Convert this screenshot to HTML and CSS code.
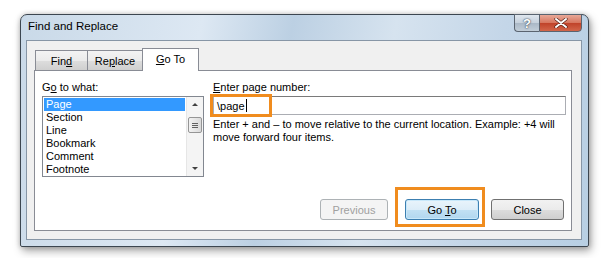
FILE: index.html
```html
<!DOCTYPE html>
<html>
    <head>
        <meta charset="utf-8">
        <title>Find and Replace</title>
        <link rel="stylesheet" href="styles.css">
    </head>
    <body>
        <div class="stage">
            <div class="window">
                <div class="titlebar">
                    <span class="title">Find and Replace</span>
                    <div class="caption-buttons">
                        <span class="cap-help">?</span>
                        <span class="cap-close">
                            <svg width="14" height="10" viewBox="0 0 14 10">
                                <path d="M2 1 L12 9 M12 1 L2 9" stroke="#4a1a10" stroke-width="3.2" stroke-linecap="round"/>
                                <path d="M2 1 L12 9 M12 1 L2 9" stroke="#ffffff" stroke-width="2" stroke-linecap="round"/>
                            </svg>
                        </span>
                    </div>
                </div>

                <div class="client">
                    <div class="tabs">
                        <div class="tab">Fin<u>d</u></div>
                        <div class="tab">Re<u>p</u>lace</div>
                        <div class="tab active"><u>G</u>o To</div>
                    </div>

                    <div class="panel">
                        <div class="fields">
                            <div class="col-left">
                                <label>G<u>o</u> to what:</label>
                                <div class="listbox">
                                    <ul class="items">
                                        <li class="selected">Page</li>
                                        <li>Section</li>
                                        <li>Line</li>
                                        <li>Bookmark</li>
                                        <li>Comment</li>
                                        <li>Footnote</li>
                                    </ul>
                                    <div class="scrollbar">
                                        <span class="arrow up"></span>
                                        <span class="thumb"><i></i><i></i><i></i></span>
                                        <span class="arrow down"></span>
                                    </div>
                                </div>
                            </div>
                            <div class="col-right">
                                <label><u>E</u>nter page number:</label>
                                <div class="textbox">
                                    <span class="value">\page</span><span class="caret"></span>
                                    <span class="highlight hl-input"></span>
                                </div>
                                <p class="hint">Enter + and &ndash; to move relative to the current location. Example: +4 will move forward four items.</p>
                            </div>
                        </div>

                        <div class="button-row">
                            <button class="btn" disabled>Previous</button>
                            <button class="btn default">Go <u>T</u>o<span class="highlight hl-button"></span></button>
                            <button class="btn">Close</button>
                        </div>
                    </div>
                </div>
            </div>
        </div>
    </body>
</html>
```

FILE: styles.css
```css
* {
    margin: 0;
    padding: 0;
    box-sizing: border-box;
}

body {
    width: 609px;
    height: 258px;
    background: #ffffff;
    font-family: 'Liberation Sans', Arial, sans-serif;
    font-size: 11px;
    color: #000000;
    overflow: hidden;
}

.stage {
    padding: 14px 20px 0 20px;
}

.window {
    width: 569px;
    height: 233px;
    border: 1px solid #3c4650;
    border-radius: 7px 7px 2px 2px;
    background: linear-gradient(100deg, #c9d9e8 0%, #dde8f3 30%, #bcd0e3 45%, #d6e3ef 62%, #c4d6e8 80%, #b8cfe3 100%);
    box-shadow: 2px 4px 8px rgba(0,0,0,0.35), 0 0 5px rgba(0,0,0,0.2);
    display: flex;
    flex-direction: column;
}

.titlebar {
    height: 25px;
    display: flex;
    align-items: flex-start;
    justify-content: space-between;
    padding-left: 7px;
}

.title {
    margin-top: 5px;
    font-size: 11.5px;
    color: #000000;
}

.caption-buttons {
    display: flex;
    margin-right: 6px;
    margin-top: -1px;
}

.cap-help,
.cap-close {
    height: 18px;
    display: flex;
    align-items: center;
    justify-content: center;
    border: 1px solid #5a6470;
}

.cap-help {
    width: 25px;
    border-radius: 0 0 0 4px;
    border-right: none;
    background: linear-gradient(#dfe6ee 0%, #c6d1dc 50%, #aab8c6 51%, #c2ced9 100%);
    color: #ffffff;
    font-weight: bold;
    font-size: 13px;
    text-shadow: 0 0 2px #3a4a5a, 0 0 1px #3a4a5a;
}

.cap-close {
    width: 43px;
    border-radius: 0 0 4px 0;
    background: linear-gradient(#e8a898 0%, #d7775f 48%, #c0432a 52%, #d2664a 100%);
}

.client {
    flex: 1;
    margin: 0 6px 6px 5px;
    background: #f0f0f0;
    border: 1px solid #8796a6;
    padding: 7px 9px 8px 7px;
    display: flex;
    flex-direction: column;
}

.tabs {
    display: flex;
    align-items: flex-end;
    padding-left: 1px;
    height: 22px;
    position: relative;
    z-index: 1;
}

.tab {
    height: 20px;
    padding: 2px 0 0 0;
    text-align: center;
    border: 1px solid #898c95;
    border-bottom: none;
    background: linear-gradient(#f3f3f3 0%, #ebebeb 50%, #dddddd 51%, #cfcfcf 100%);
    margin-right: -1px;
    line-height: 17px;
}

.tab:nth-child(1) {
    width: 53px;
}

.tab:nth-child(2) {
    width: 56px;
}

.tab.active {
    width: 57px;
    height: 23px;
    background: #ffffff;
    margin-bottom: -1px;
    padding-top: 2px;
}

.panel {
    flex: 1;
    background: #ffffff;
    border: 1px solid #898c95;
    padding: 9px 5px 10px 7px;
    display: flex;
    flex-direction: column;
}

.fields {
    display: flex;
    gap: 9px;
}

label {
    display: block;
    line-height: 15px;
    margin-bottom: 1px;
}

.col-left {
    width: 162px;
}

.listbox {
    height: 81px;
    border: 1px solid #828790;
    display: flex;
}

.items {
    flex: 1;
    list-style: none;
    padding: 1px 1px 0 1px;
}

.items li {
    height: 13px;
    line-height: 13px;
    padding-left: 2px;
}

.items li.selected {
    background: #3399ff;
    color: #ffffff;
}

.scrollbar {
    width: 17px;
    background: #f4f4f4;
    border-left: 1px solid #e6e6e6;
    display: flex;
    flex-direction: column;
    align-items: center;
}

.arrow {
    width: 0;
    height: 0;
    border-left: 3px solid transparent;
    border-right: 3px solid transparent;
}

.arrow.up {
    margin-top: 6px;
    border-bottom: 3px solid #404040;
}

.arrow.down {
    margin-top: auto;
    margin-bottom: 6px;
    border-top: 3px solid #404040;
}

.thumb {
    margin-top: 11px;
    width: 14px;
    height: 16px;
    border: 1px solid #959595;
    border-radius: 2px;
    background: linear-gradient(90deg, #f2f2f2, #dadada);
    display: flex;
    flex-direction: column;
    align-items: center;
    justify-content: center;
    gap: 1px;
}

.thumb i {
    display: block;
    width: 6px;
    height: 1px;
    background: #606060;
}

.col-right {
    flex: 1;
}

.textbox {
    position: relative;
    height: 19px;
    border: 1px solid #abadb3;
    border-top-color: #7a7a7a;
    display: flex;
    align-items: center;
    padding-left: 3px;
}

.caret {
    width: 1px;
    height: 13px;
    background: #000000;
    margin-left: 1px;
}

.highlight {
    position: absolute;
    border: 3px solid #f08c1e;
    pointer-events: none;
}

.hl-input {
    left: -4px;
    top: -3px;
    width: 62px;
    height: 23px;
}

.hint {
    margin-top: 3px;
    line-height: 13px;
}

.button-row {
    margin-top: auto;
    display: flex;
    justify-content: flex-end;
    gap: 17px;
    padding-right: 2px;
}

.btn {
    position: relative;
    height: 21px;
    border: 1px solid #707070;
    border-radius: 3px;
    background: linear-gradient(#f2f2f2 0%, #ebebeb 50%, #dddddd 51%, #cfcfcf 100%);
    font-family: 'Liberation Sans', Arial, sans-serif;
    font-size: 11px;
    color: #000000;
}

.btn:nth-child(1) {
    width: 68px;
}

.btn:nth-child(2) {
    width: 74px;
}

.btn:nth-child(3) {
    width: 73px;
    margin-left: -5px;
}

.btn:disabled {
    border-color: #adb2b5;
    background: #f4f4f4;
    color: #a0a0a0;
}

.btn.default {
    border-color: #3c7fb1;
    background: linear-gradient(#e9f4fb 0%, #dcedf8 50%, #c2e1f4 51%, #b1d7ef 100%);
    box-shadow: inset 0 0 0 1px #c8e8fa;
}

.hl-button {
    left: -11px;
    top: -13px;
    width: 90px;
    height: 40px;
}
```
